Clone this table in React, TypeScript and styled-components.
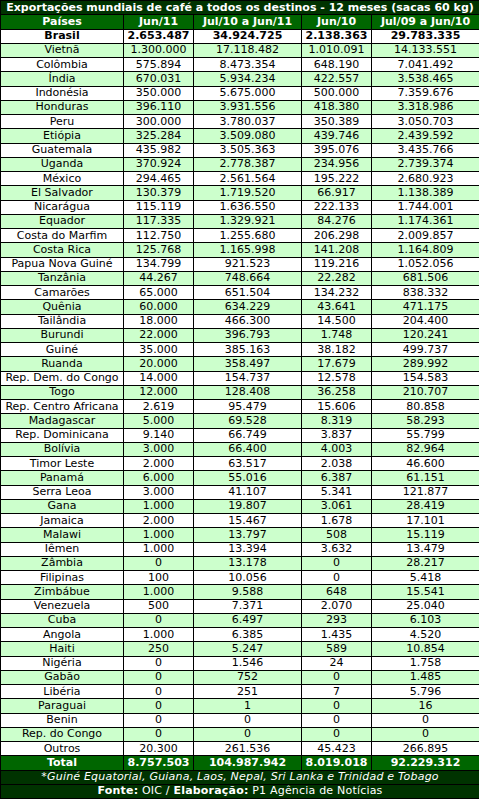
import React from "react";
import styled, { createGlobalStyle, css } from "styled-components";

const Global = createGlobalStyle`
  html, body { margin: 0; padding: 0; background: #fff; }
  body { font-family: "DejaVu Sans", Verdana, sans-serif; }
`;

const Table = styled.table`
  width: 479px;
  height: 799px;
  border-collapse: collapse;
  table-layout: fixed;
  font-family: "DejaVu Sans", Verdana, sans-serif;
  font-size: 11px;
  color: #000;
`;

type Variant = "title" | "head" | "white" | "green" | "bold" | "total" | "foot";

const bgFor: Record<Variant, string> = {
  title: "#003300",
  head: "#006600",
  white: "#ffffff",
  green: "#ccffcc",
  bold: "#ffffff",
  total: "#006600",
  foot: "#003300",
};

const Row = styled.tr<{ $v: Variant }>`
  background: ${(p) => bgFor[p.$v]};
  ${(p) =>
    (p.$v === "title" || p.$v === "head" || p.$v === "total" || p.$v === "foot") &&
    css`
      color: #ffffff;
    `}
  ${(p) =>
    (p.$v === "title" || p.$v === "head" || p.$v === "total" || p.$v === "bold") &&
    css`
      font-weight: bold;
    `}
  ${(p) =>
    p.$v === "foot" &&
    css`
      letter-spacing: 0.2px;
    `}
`;

const Cell = styled.td<{ $italic?: boolean }>`
  border: 1px solid #000;
  padding: 0 1px;
  text-align: center;
  vertical-align: middle;
  white-space: nowrap;
  overflow: hidden;
  line-height: 12px;
  font-style: ${(p) => (p.$italic ? "italic" : "normal")};
`;

const Strong = styled.b`
  font-weight: bold;
`;

const rows: [string, string, string, string, string][] = [
  ["Vietnã", "1.300.000", "17.118.482", "1.010.091", "14.133.551"],
  ["Colômbia", "575.894", "8.473.354", "648.190", "7.041.492"],
  ["Índia", "670.031", "5.934.234", "422.557", "3.538.465"],
  ["Indonésia", "350.000", "5.675.000", "500.000", "7.359.676"],
  ["Honduras", "396.110", "3.931.556", "418.380", "3.318.986"],
  ["Peru", "300.000", "3.780.037", "350.389", "3.050.703"],
  ["Etiópia", "325.284", "3.509.080", "439.746", "2.439.592"],
  ["Guatemala", "435.982", "3.505.363", "395.076", "3.435.766"],
  ["Uganda", "370.924", "2.778.387", "234.956", "2.739.374"],
  ["México", "294.465", "2.561.564", "195.222", "2.680.923"],
  ["El Salvador", "130.379", "1.719.520", "66.917", "1.138.389"],
  ["Nicarágua", "115.119", "1.636.550", "222.133", "1.744.001"],
  ["Equador", "117.335", "1.329.921", "84.276", "1.174.361"],
  ["Costa do Marfim", "112.750", "1.255.680", "206.298", "2.009.857"],
  ["Costa Rica", "125.768", "1.165.998", "141.208", "1.164.809"],
  ["Papua Nova Guiné", "134.799", "921.523", "119.216", "1.052.056"],
  ["Tanzânia", "44.267", "748.664", "22.282", "681.506"],
  ["Camarões", "65.000", "651.504", "134.232", "838.332"],
  ["Quênia", "60.000", "634.229", "43.641", "471.175"],
  ["Tailândia", "18.000", "466.300", "14.500", "204.400"],
  ["Burundi", "22.000", "396.793", "1.748", "120.241"],
  ["Guiné", "35.000", "385.163", "38.182", "499.737"],
  ["Ruanda", "20.000", "358.497", "17.679", "289.992"],
  ["Rep. Dem. do Congo", "14.000", "154.737", "12.578", "154.583"],
  ["Togo", "12.000", "128.408", "36.258", "210.707"],
  ["Rep. Centro Africana", "2.619", "95.479", "15.606", "80.858"],
  ["Madagascar", "5.000", "69.528", "8.319", "58.293"],
  ["Rep. Dominicana", "9.140", "66.749", "3.837", "55.799"],
  ["Bolívia", "3.000", "66.400", "4.003", "82.964"],
  ["Timor Leste", "2.000", "63.517", "2.038", "46.600"],
  ["Panamá", "6.000", "55.016", "6.387", "61.151"],
  ["Serra Leoa", "3.000", "41.107", "5.341", "121.877"],
  ["Gana", "1.000", "19.807", "3.061", "28.419"],
  ["Jamaica", "2.000", "15.467", "1.678", "17.101"],
  ["Malawi", "1.000", "13.797", "508", "15.119"],
  ["Iêmen", "1.000", "13.394", "3.632", "13.479"],
  ["Zâmbia", "0", "13.178", "0", "28.217"],
  ["Filipinas", "100", "10.056", "0", "5.418"],
  ["Zimbábue", "1.000", "9.588", "648", "15.541"],
  ["Venezuela", "500", "7.371", "2.070", "25.040"],
  ["Cuba", "0", "6.497", "293", "6.103"],
  ["Angola", "1.000", "6.385", "1.435", "4.520"],
  ["Haiti", "250", "5.247", "589", "10.854"],
  ["Nigéria", "0", "1.546", "24", "1.758"],
  ["Gabão", "0", "752", "0", "1.485"],
  ["Libéria", "0", "251", "7", "5.796"],
  ["Paraguai", "0", "1", "0", "16"],
  ["Benin", "0", "0", "0", "0"],
  ["Rep. do Congo", "0", "0", "0", "0"],
  ["Outros", "20.300", "261.536", "45.423", "266.895"],
];

const DataRow = ({ v, cells }: { v: Variant; cells: string[] }) => (
  <Row $v={v}>
    {cells.map((c, i) => (
      <Cell key={i}>{c}</Cell>
    ))}
  </Row>
);

export default function App() {
  return (
    <>
      <Global />
      <Table>
        <colgroup>
          <col style={{ width: 123 }} />
          <col style={{ width: 70 }} />
          <col style={{ width: 108 }} />
          <col style={{ width: 70 }} />
          <col style={{ width: 108 }} />
        </colgroup>
        <tbody>
          <Row $v="title">
            <Cell colSpan={5}>
              Exportações mundiais de café a todos os destinos - 12 meses (sacas 60 kg)
            </Cell>
          </Row>
          <DataRow v="head" cells={["Países", "Jun/11", "Jul/10 a Jun/11", "Jun/10", "Jul/09 a Jun/10"]} />
          <DataRow v="bold" cells={["Brasil", "2.653.487", "34.924.725", "2.138.363", "29.783.335"]} />
          {rows.map((r, i) => (
            <DataRow key={r[0]} v={i % 2 === 0 ? "green" : "white"} cells={r} />
          ))}
          <DataRow v="total" cells={["Total", "8.757.503", "104.987.942", "8.019.018", "92.229.312"]} />
          <Row $v="foot">
            <Cell colSpan={5} $italic>
              *Guiné Equatorial, Guiana, Laos, Nepal, Sri Lanka e Trinidad e Tobago
            </Cell>
          </Row>
          <Row $v="foot">
            <Cell colSpan={5}>
              <Strong>Fonte:</Strong> OIC / <Strong>Elaboração:</Strong> P1 Agência de Notícias
            </Cell>
          </Row>
        </tbody>
      </Table>
    </>
  );
}
